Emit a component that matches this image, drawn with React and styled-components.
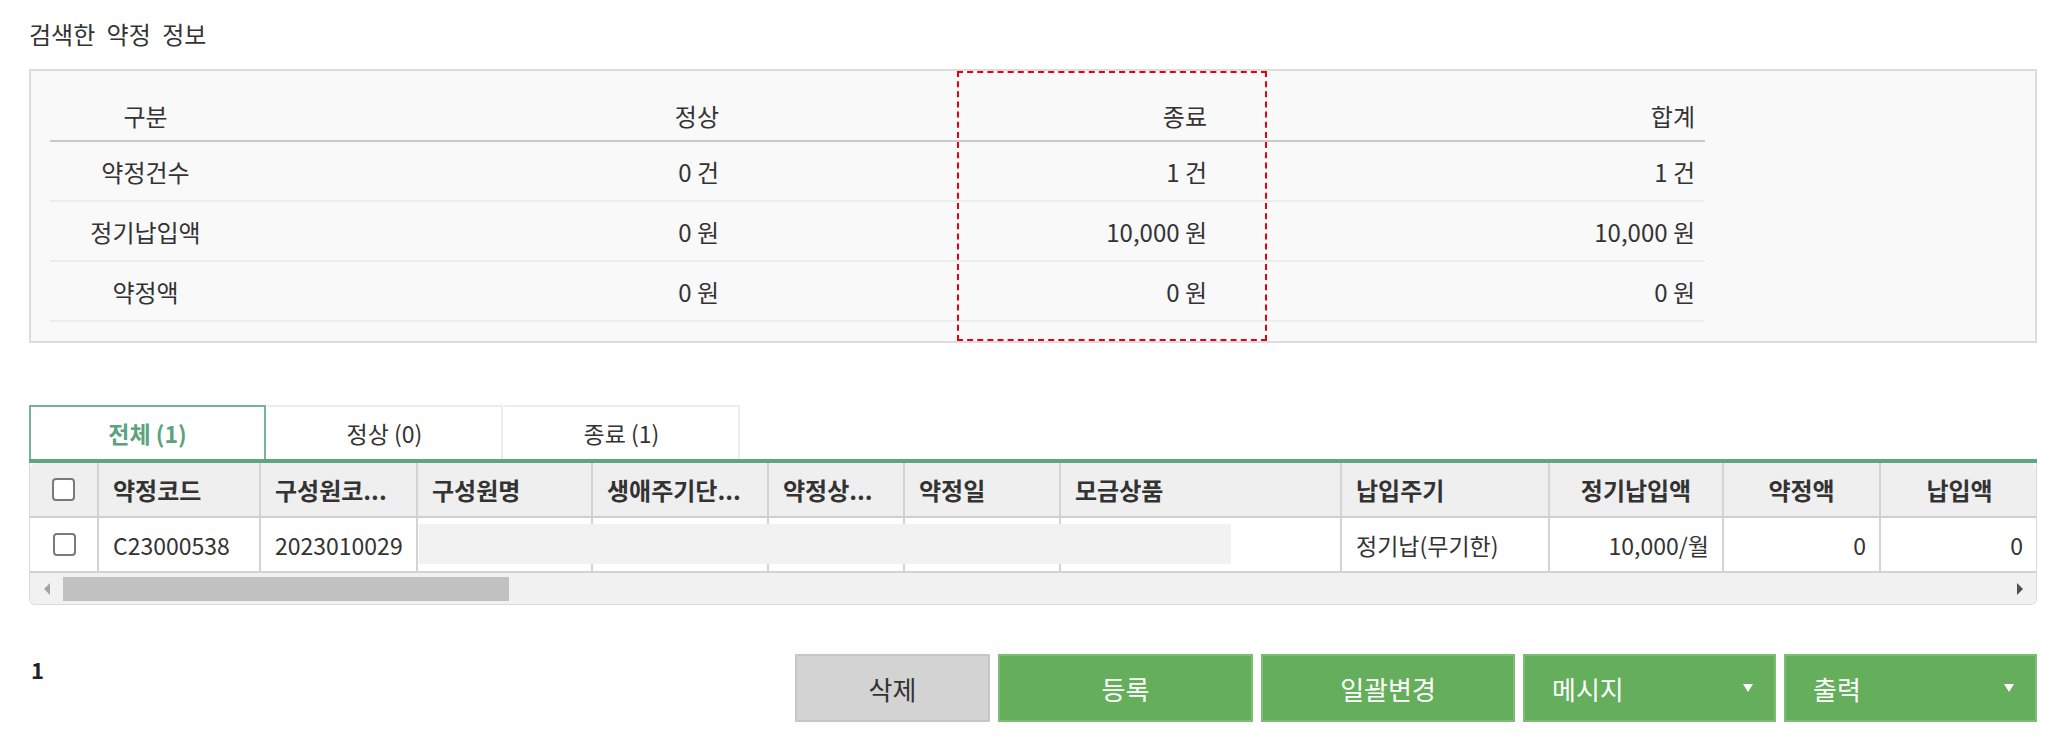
import React from 'react';
import styled, { createGlobalStyle } from 'styled-components';

const GlobalStyle = createGlobalStyle`
  body {
    margin: 0;
    background: #fff;
    font-family: "Noto Sans CJK KR", "Noto Sans", sans-serif;
    color: #333;
  }
`;

const summaryRows = [
  { label: '약정건수', normal: '0 건', ended: '1 건', total: '1 건' },
  { label: '정기납입액', normal: '0 원', ended: '10,000 원', total: '10,000 원' },
  { label: '약정액', normal: '0 원', ended: '0 원', total: '0 원' },
];

const tabs = [
  { label: '전체 (1)', active: true },
  { label: '정상 (0)' },
  { label: '종료 (1)' },
];

const columns = [
  { key: 'check', title: '', width: 69, align: 'center' },
  { key: 'code', title: '약정코드', width: 162 },
  { key: 'member', title: '구성원코...', width: 157 },
  { key: 'name', title: '구성원명', width: 175 },
  { key: 'life', title: '생애주기단...', width: 176 },
  { key: 'state', title: '약정상...', width: 136 },
  { key: 'date', title: '약정일', width: 156 },
  { key: 'product', title: '모금상품', width: 281 },
  { key: 'cycle', title: '납입주기', width: 208 },
  { key: 'regular', title: '정기납입액', width: 174, align: 'center', cellAlign: 'right' },
  { key: 'pledge', title: '약정액', width: 157, align: 'center', cellAlign: 'right' },
  { key: 'paid', title: '납입액', width: 157, align: 'center', cellAlign: 'right' },
];

const rows = [
  {
    code: 'C23000538',
    member: '2023010029',
    name: '',
    life: '',
    state: '',
    date: '',
    product: '',
    cycle: '정기납(무기한)',
    regular: '10,000/월',
    pledge: '0',
    paid: '0',
  },
];

const gridTemplate = columns.map((c) => `${c.width}px`).join(' ');

const justify = (align) =>
  align === 'center' ? 'center' : align === 'right' ? 'flex-end' : 'flex-start';

const App = () => (
  <>
    <GlobalStyle />
    <Page>
      <Title>검색한 약정 정보</Title>

      <SummaryBox>
        <SummaryGrid>
          <SummaryHead $align="center">구분</SummaryHead>
          <SummaryHead>정상</SummaryHead>
          <SummaryHead>종료</SummaryHead>
          <SummaryHead>합계</SummaryHead>
          {summaryRows.map((row) => (
            <React.Fragment key={row.label}>
              <SummaryCell $align="center">{row.label}</SummaryCell>
              <SummaryCell>{row.normal}</SummaryCell>
              <SummaryCell>{row.ended}</SummaryCell>
              <SummaryCell>{row.total}</SummaryCell>
            </React.Fragment>
          ))}
        </SummaryGrid>
        <Highlight />
      </SummaryBox>

      <TabBar>
        {tabs.map((tab) => (
          <Tab key={tab.label} $active={tab.active}>
            {tab.label}
          </Tab>
        ))}
      </TabBar>

      <Grid>
        <HeaderRow>
          {columns.map((col) => (
            <HeaderCell key={col.key} $align={col.align}>
              {col.key === 'check' ? <Checkbox /> : col.title}
            </HeaderCell>
          ))}
        </HeaderRow>
        {rows.map((row) => (
          <DataRow key={row.code}>
            {columns.map((col) => (
              <DataCell key={col.key} $align={col.cellAlign || col.align}>
                {col.key === 'check' ? <Checkbox /> : row[col.key]}
              </DataCell>
            ))}
            <Masked />
          </DataRow>
        ))}
        <ScrollBar>
          <ArrowBox>
            <ArrowLeft />
          </ArrowBox>
          <Track>
            <Thumb />
          </Track>
          <ArrowBox>
            <ArrowRight />
          </ArrowBox>
        </ScrollBar>
      </Grid>

      <Footer>
        <PageCount>1</PageCount>
        <Buttons>
          <Button $variant="gray" $width={195}>삭제</Button>
          <Button $width={255}>등록</Button>
          <Button $width={254}>일괄변경</Button>
          <Button $width={253} $dropdown>
            메시지
            <Caret />
          </Button>
          <Button $width={253} $dropdown>
            출력
            <Caret />
          </Button>
        </Buttons>
      </Footer>
    </Page>
  </>
);

const Page = styled.div`
  width: 2008px;
  padding: 19px 21px 0 29px;
`;

const Title = styled.div`
  font-size: 24px;
  line-height: 30px;
  word-spacing: 6px;
  color: #333;
  margin-bottom: 20px;
`;

const SummaryBox = styled.div`
  position: relative;
  box-sizing: border-box;
  height: 274px;
  padding: 19px;
  background: #f9f9f9;
  border: 2px solid #dcdcdc;
`;

const SummaryGrid = styled.div`
  display: grid;
  grid-template-columns: 191px 488px 488px 488px;
  font-size: 24px;
  color: #333;
`;

const SummaryHead = styled.div`
  box-sizing: border-box;
  height: 52px;
  display: flex;
  align-items: center;
  justify-content: ${({ $align }) => justify($align || 'right')};
  padding-right: ${({ $align }) => ($align === 'center' ? '0' : '10px')};
  border-bottom: 2px solid #c9c9c9;
`;

const SummaryCell = styled(SummaryHead)`
  height: 60px;
  border-bottom: 2px solid #ededed;
`;

const Highlight = styled.div`
  position: absolute;
  left: 926px;
  top: 0;
  bottom: 0;
  width: 310px;
  box-sizing: border-box;
  border: 2px dashed #e60012;
  pointer-events: none;
`;

const TabBar = styled.div`
  display: flex;
  margin-top: 62px;
  border-bottom: 4px solid #5ea682;
`;

const Tab = styled.div`
  box-sizing: border-box;
  width: 237px;
  height: 54px;
  display: flex;
  align-items: center;
  justify-content: center;
  font-size: 23px;
  background: #fff;
  color: ${({ $active }) => ($active ? '#5ba27e' : '#333')};
  font-weight: ${({ $active }) => ($active ? 600 : 400)};
  border: 2px solid ${({ $active }) => ($active ? '#74b596' : 'transparent')};
  border-bottom: none;
  border-top-color: ${({ $active }) => ($active ? '#74b596' : '#ececec')};
  border-right-color: ${({ $active }) => ($active ? '#74b596' : '#ececec')};
`;

const Grid = styled.div`
  border: 1px solid #dadada;
  border-top: none;
  border-radius: 0 0 6px 6px;
  overflow: hidden;
  font-size: 23px;
`;

const HeaderRow = styled.div`
  display: grid;
  grid-template-columns: ${gridTemplate};
  height: 55px;
  box-sizing: border-box;
  background: #efefef;
  border-bottom: 2px solid #cfcfcf;
  border-top-left-radius: 6px;
  border-top-right-radius: 6px;
`;

const HeaderCell = styled.div`
  display: flex;
  align-items: center;
  justify-content: ${({ $align }) => justify($align)};
  padding: 0 14px;
  overflow: hidden;
  white-space: nowrap;
  font-size: 24px;
  font-weight: 600;
  color: #333;
  border-right: 2px solid #d3d3d3;

  &:last-child {
    border-right: none;
  }
`;

const DataRow = styled.div`
  position: relative;
  display: grid;
  grid-template-columns: ${gridTemplate};
  height: 55px;
  box-sizing: border-box;
  background: #fff;
  border-bottom: 2px solid #d3d3d3;
`;

const DataCell = styled(HeaderCell)`
  font-size: 23px;
  font-weight: 400;
  padding: 0 13px 0 14px;
`;

const Masked = styled.div`
  position: absolute;
  left: 389px;
  top: 6px;
  width: 812px;
  height: 40px;
  background: #f2f2f2;
`;

const Checkbox = styled.span`
  display: block;
  box-sizing: border-box;
  width: 23px;
  height: 23px;
  border: 2px solid #7a7a7a;
  border-radius: 4px;
  background: #fff;
`;

const ScrollBar = styled.div`
  display: flex;
  align-items: center;
  height: 31px;
  background: #f1f1f1;
`;

const ArrowBox = styled.div`
  width: 33px;
  height: 100%;
  display: flex;
  align-items: center;
  justify-content: center;
`;

const ArrowLeft = styled.span`
  width: 0;
  height: 0;
  border-top: 6px solid transparent;
  border-bottom: 6px solid transparent;
  border-right: 6px solid #a3a3a3;
`;

const ArrowRight = styled.span`
  width: 0;
  height: 0;
  border-top: 6px solid transparent;
  border-bottom: 6px solid transparent;
  border-left: 6px solid #505050;
`;

const Track = styled.div`
  flex: 1;
  height: 24px;
`;

const Thumb = styled.div`
  width: 446px;
  height: 100%;
  background: #c1c1c1;
`;

const Footer = styled.div`
  display: flex;
  align-items: center;
  margin-top: 49px;
`;

const PageCount = styled.div`
  font-size: 22px;
  font-weight: 700;
  color: #222;
  padding-left: 2px;
  margin-top: -38px;
`;

const Buttons = styled.div`
  display: flex;
  gap: 8px;
  margin-left: auto;
`;

const Button = styled.button`
  box-sizing: border-box;
  width: ${({ $width }) => $width}px;
  height: 68px;
  display: flex;
  align-items: center;
  justify-content: ${({ $dropdown }) => ($dropdown ? 'space-between' : 'center')};
  padding: ${({ $dropdown }) => ($dropdown ? '0 21px 0 27px' : '0')};
  font-family: "Noto Sans CJK KR", "Noto Sans", sans-serif;
  font-size: 26px;
  cursor: pointer;
  background: ${({ $variant }) => ($variant === 'gray' ? '#d3d3d3' : '#65ae5c')};
  color: ${({ $variant }) => ($variant === 'gray' ? '#333' : '#fff')};
  border: 2px solid ${({ $variant }) => ($variant === 'gray' ? '#c6c6c6' : '#7cbc73')};
`;

const Caret = styled.span`
  width: 0;
  height: 0;
  border-left: 5px solid transparent;
  border-right: 5px solid transparent;
  border-top: 8px solid #fff;
`;

export default App;
